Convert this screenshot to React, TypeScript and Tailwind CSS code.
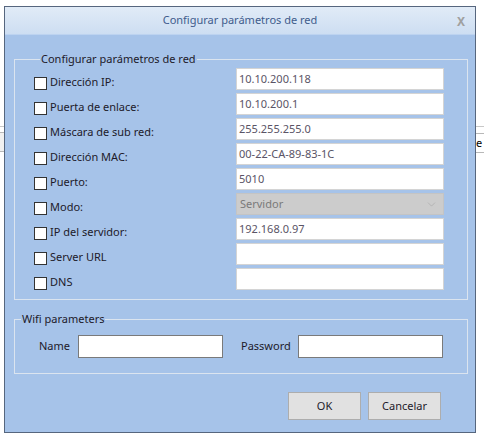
import { ChevronDown } from "lucide-react"

const font = { fontFamily: '"Noto Sans", "Open Sans", sans-serif' }

type Row = { label: string; value: string; select?: boolean }

const rows: Row[] = [
  { label: "Dirección IP:", value: "10.10.200.118" },
  { label: "Puerta de enlace:", value: "10.10.200.1" },
  { label: "Máscara de sub red:", value: "255.255.255.0" },
  { label: "Dirección MAC:", value: "00-22-CA-89-83-1C" },
  { label: "Puerto:", value: "5010" },
  { label: "Modo:", value: "Servidor", select: true },
  { label: "IP del servidor:", value: "192.168.0.97" },
  { label: "Server URL", value: "" },
  { label: "DNS", value: "" },
]

const FieldRow = ({ row }: { row: Row }) => {
  return <div className="flex h-[25px]">
    <div className="flex w-[202px] items-start pt-[9px]">
      <div className="w-[13px] h-[13px] border border-[#333] bg-white shrink-0" />
      <span className="ml-[3px] -mt-[5px] text-[11px] text-[#1d1a2a] leading-[20px]">{row.label}</span>
    </div>
    {row.select ? (
      <div className="w-[208px] h-[22px] bg-[#cccccc] border border-[#c4c4c4] flex items-center justify-between px-[3px]">
        <span className="text-[11px] text-[#7a7a7a]">{row.value}</span>
        <ChevronDown size={13} strokeWidth={1} className="text-[#a0a0a0] mr-[2px]" />
      </div>
    ) : (
      <div className="w-[208px] h-[22px] bg-white border border-[#d4d4d4] flex items-center px-[2px]">
        <span className="text-[11px] text-[#5a5466]">{row.value}</span>
      </div>
    )}
  </div>
}

export default function App() {
  return <div className="relative w-[484px] h-[444px] bg-white overflow-hidden" style={font}>
    {/* page content peeking out behind the dialog */}
    <div className="absolute left-0 top-[126px] w-[484px] h-[1px] bg-[#c8c8c8]" />
    <div className="absolute left-0 top-[132px] w-[6px] h-[20px] bg-[#f0f0f0] border-y border-[#b8b8b8]" />
    <div className="absolute left-[474px] top-[133px] w-[12px] h-[20px] bg-white border border-[#b8b8b8] text-[11px] leading-[18px] pl-[1px]">e</div>

    <div className="absolute left-[4px] top-[6px] w-[472px] h-[427px] border border-[#56667e] bg-[#a6c3e9] flex flex-col">
      <div className="h-[28px] flex items-center justify-center relative bg-gradient-to-b from-[#e1ebf7] to-[#cddef2] border-b border-[#bdd3f0]">
        <span className="text-[11px] text-[#3f5c8c]">Configurar parámetros de red</span>
        <span className="absolute right-[10px] top-[6px] text-[12px] font-bold text-[#a0a0a0]">X</span>
      </div>

      <div className="flex flex-col px-[9px]">
        <fieldset className="mt-[17px] w-[454px] h-[248px] border border-[#dbe4ef] pl-[19px] pt-[2px]">
          <legend className="ml-[6px] px-[1px] text-[11px] text-[#1d1a2a] leading-[14px]">Configurar parámetros de red</legend>
          {rows.map((r) => <FieldRow key={r.label} row={r} />)}
        </fieldset>

        <fieldset className="mt-[12px] w-[454px] h-[62px] border border-[#dbe4ef] pt-[9px]">
          <legend className="ml-[6px] px-[1px] text-[11px] text-[#1d1a2a] leading-[14px]">Wifi parameters</legend>
          <div className="flex items-center">
            <span className="ml-[24px] w-[39px] text-[11px] text-[#1d1a2a]">Name</span>
            <div className="w-[145px] h-[23px] bg-white border border-[#7a7a7a]" />
            <span className="ml-[18px] w-[57px] text-[11px] text-[#1d1a2a]">Password</span>
            <div className="w-[145px] h-[23px] bg-white border border-[#7a7a7a]" />
          </div>
        </fieldset>

        <div className="flex justify-end gap-[7px] mt-[18px] pr-[25px]">
          <button className="w-[73px] h-[28px] bg-[#e1e1e1] border border-[#adadad] text-[11px] text-[#1d1a2a]">OK</button>
          <button className="w-[73px] h-[28px] bg-[#e1e1e1] border border-[#adadad] text-[11px] text-[#1d1a2a]">Cancelar</button>
        </div>
      </div>
    </div>
  </div>
}
